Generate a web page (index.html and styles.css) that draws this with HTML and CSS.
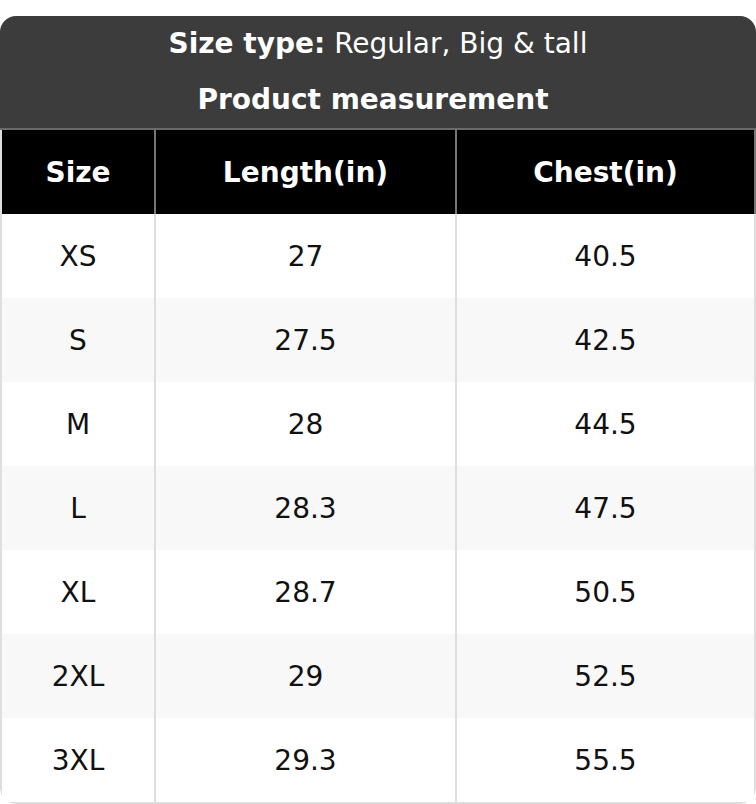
FILE: index.html
```html
<!DOCTYPE html>
<html>
<head>
<meta charset="utf-8">
<link rel="stylesheet" href="styles.css">
</head>
<body>
<div class="card">
  <div class="title">
    <div class="title-line"><b>Size type:</b> Regular, Big &amp; tall</div>
    <div class="title-line sub"><b>Product measurement</b></div>
  </div>
  <div class="grid">
    <div class="cell head">Size</div><div class="cell head">Length(in)</div><div class="cell head">Chest(in)</div>
    <div class="cell">XS</div><div class="cell">27</div><div class="cell">40.5</div>
    <div class="cell alt">S</div><div class="cell alt">27.5</div><div class="cell alt">42.5</div>
    <div class="cell">M</div><div class="cell">28</div><div class="cell">44.5</div>
    <div class="cell alt">L</div><div class="cell alt">28.3</div><div class="cell alt">47.5</div>
    <div class="cell">XL</div><div class="cell">28.7</div><div class="cell">50.5</div>
    <div class="cell alt">2XL</div><div class="cell alt">29</div><div class="cell alt">52.5</div>
    <div class="cell">3XL</div><div class="cell">29.3</div><div class="cell">55.5</div>
  </div>
</div>
</body>
</html>
```
FILE: styles.css
```css
* { box-sizing: border-box; }
html, body { margin: 0; padding: 0; background: #fff; }
body { font-family: "DejaVu Sans", sans-serif; font-size: 28px; color: #111; }
.card {
  margin-top: 16px;
  width: 756px;
  border-radius: 16px;
  overflow: hidden;
}
.title {
  background: #3c3c3c;
  color: #fff;
  height: 114px;
  padding-top: 11px;
  border-bottom: 2px solid #6a6a6a;
}
.title-line {
  height: 56px;
  line-height: 34px;
  text-align: center;
}
.title-line.sub { padding-right: 10px; }
.grid {
  display: grid;
  grid-template-columns: 154px 301px 297px;
  grid-auto-rows: 84px;
  border: 2px solid #dedede;
  border-top: none;
  border-radius: 0 0 16px 16px;
}
.cell {
  display: flex;
  align-items: center;
  justify-content: center;
  border-right: 2px solid #dedede;
  background: #fff;
}
.cell:nth-child(3n) { border-right: none; }
.cell.alt { background: #f8f8f8; }
.cell.head {
  background: #000;
  color: #fff;
  font-weight: bold;
  border-right-color: #777;
}
.cell.head:nth-child(3n) { border-right: 2px solid #777; margin-right: -2px; }
```
